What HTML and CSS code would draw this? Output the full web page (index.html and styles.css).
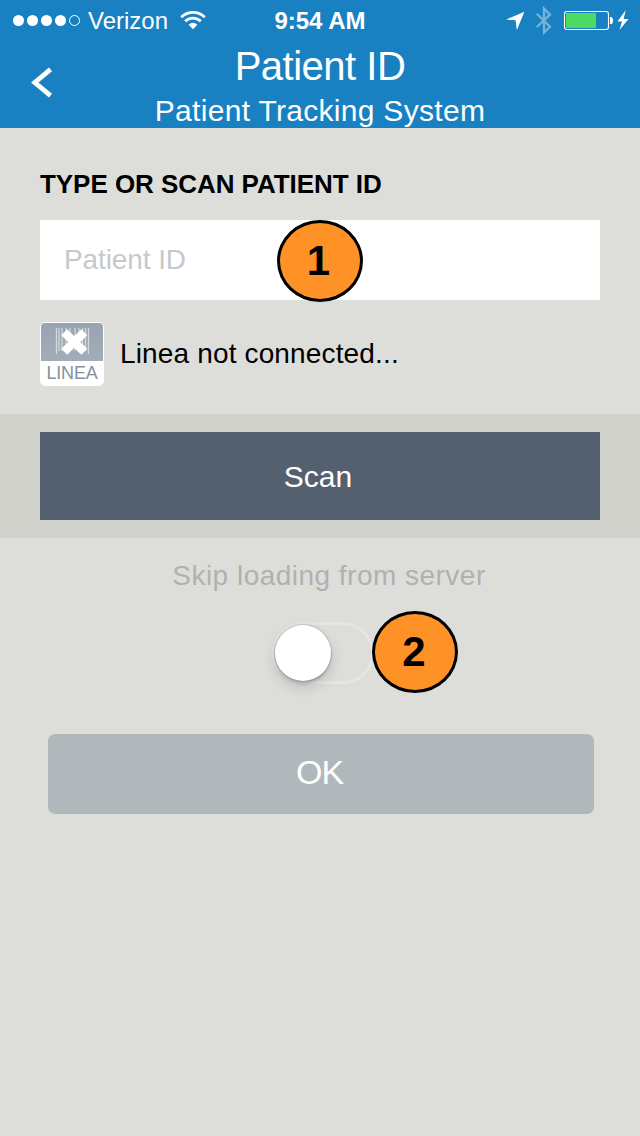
FILE: index.html
```html
<!DOCTYPE html>
<html lang="en">
<head>
<meta charset="utf-8">
<title>Patient ID</title>
<link rel="stylesheet" href="styles.css">
</head>
<body>
<header class="header">
  <div class="status">
    <div class="status-left">
      <svg class="signal" width="68" height="12" viewBox="0 0 68 12" fill="#fff">
        <circle cx="5.5" cy="5.500" r="5.500"/><circle cx="19.5" cy="5.500" r="5.500"/><circle cx="33.5" cy="5.500" r="5.500"/><circle cx="47.5" cy="5.500" r="5.500"/>
        <circle cx="61.5" cy="5.500" r="5" fill="none" stroke="#fff"/>
      </svg>
      <span class="carrier">Verizon</span>
      <svg class="wifi" width="26" height="20" viewBox="0 0 26 20">
        <g fill="none" stroke="#fff" stroke-width="2.8">
          <path d="M1.2 7.2A16.6 16.6 0 0 1 24.8 7.2"/>
          <path d="M5.2 11.3A11 11 0 0 1 20.8 11.3"/>
        </g>
        <path d="M8.6 14.7A6.2 6.2 0 0 1 17.4 14.7L13 19.2Z" fill="#fff"/>
      </svg>
    </div>
    <span class="time">9:54 AM</span>
    <div class="status-right">
      <svg width="124" height="30" viewBox="0 0 124 30">
        <path d="M-0.200 14.600L18.400 6.700L10.800 25.200L9.600 15.200Z" fill="#fff"/>
        <path d="M30.800 8.700L44 21.800L38 27.600V3.600L44 9.600L30.800 22" fill="none" stroke="#73b3dc" stroke-width="2.300"/>
        <rect x="58.500" y="6.500" width="44" height="18" rx="2.500" fill="none" stroke="#fff" stroke-width="1.100"/>
        <rect x="60" y="8" width="30" height="15" fill="#4cd964"/>
        <path d="M104 12H105.500Q107 12.500 107 15.500T105.500 19H104Z" fill="#fff"/>
        <path d="M119.800 5L111.500 16.600H116L113.500 25L122.500 14H117.600Z" fill="#fff"/>
      </svg>
    </div>
  </div>
  <div class="nav">
    <svg class="back" width="22" height="32" viewBox="0 0 22 32"><path d="M19.500 3.300L3.800 16.500L19.500 29.700" fill="none" stroke="#fff" stroke-width="4.800"/></svg>
    <div class="titles">
      <h1 class="title">Patient ID</h1>
      <p class="subtitle">Patient Tracking System</p>
    </div>
  </div>
</header>
<main>
  <section class="entry">
    <h2 class="label">TYPE OR SCAN PATIENT ID</h2>
    <div class="field">
      <span class="placeholder">Patient ID</span>
      <span class="badge badge-one">1</span>
    </div>
    <div class="device">
      <div class="linea">
        <svg class="barcode" width="62" height="38" viewBox="0 0 62 38">
          <path d="M15.500 5V31M18 5V28M21 5V28M25 5V28M29 5V28M34 5V28M38 5V28M41.500 5V28M44.500 5V28M47.500 5V31" stroke="#d3d8dd" stroke-width="1.300"/>
          <path d="M23.200 9.200L43.300 28.800M43.300 9.200L23.200 28.800" stroke="#fff" stroke-width="8.500"/>
        </svg>
        <span class="linea-name">LINEA</span>
      </div>
      <span class="device-text">Linea not connected...</span>
    </div>
  </section>
  <section class="scan-band"><div class="scan">Scan</div></section>
  <section class="options">
    <p class="skip">Skip loading from server</p>
    <div class="toggle">
      <div class="knob"></div>
      <span class="badge badge-two">2</span>
    </div>
    <div class="ok">OK</div>
  </section>
</main>
</body>
</html>
```
FILE: styles.css
```css
* { box-sizing: border-box; }
body {
  margin: 0;
  min-height: 1136px;
  background: #dddeda;
  color: #000;
  font-family: "Liberation Sans", Arial, sans-serif;
}
h1, h2, p { margin: 0; font-weight: 400; }
svg { display: block; flex: none; }
.header { height: 128px; background: #1981c1; color: #fff; }
.status {
  display: grid;
  grid-template-columns: 220px 200px 220px;
  height: 40px;
  line-height: 41px;
  font-size: 24px;
}
.status-left { display: flex; padding-left: 13px; }
.signal { margin-top: 15px; }
.carrier { width: 80px; margin-left: 7px; }
.wifi { margin: 10px 0 0 12px; }
.time { text-align: center; font-weight: 700; }
.status-right { padding-left: 66px; }
.status-right { padding-left: 86px; }
.status-right svg { margin-top: 5px; }
.nav { display: grid; grid-template-columns: 84px 1fr 84px; height: 88px; }
.back { margin: 26px 0 0 31px; }
.titles { text-align: center; white-space: nowrap; }
.title { font-size: 40px; line-height: 52px; letter-spacing: -0.5px; }
.subtitle { font-size: 30px; line-height: 37px; letter-spacing: 0.3px; }
.entry { height: 286px; padding: 36px 40px 0; }
.label { font-size: 26px; font-weight: 700; line-height: 40px; letter-spacing: -0.05px; white-space: nowrap; }
.field {
  position: relative;
  height: 80px;
  margin-top: 16px;
  padding-left: 24px;
  background: #fff;
  color: #c7c7cd;
  font-size: 28px;
  line-height: 79px;
}
.placeholder { letter-spacing: -0.1px; }
.badge {
  position: absolute;
  width: 86px;
  height: 82px;
  border: 3px solid #000;
  border-radius: 50%;
  background: #ff9226;
  color: #000;
  font-size: 42px;
  font-weight: 700;
  line-height: 75px;
  text-align: center;
}
.badge-one { left: 237px; top: 0; padding-right: 3px; }
.badge-two { left: 97px; top: -14px; padding-right: 2px; }
.device { display: flex; align-items: center; gap: 16px; margin-top: 22px; }
.linea {
  width: 64px;
  height: 64px;
  border: 1px solid #fff;
  border-radius: 5px;
  background: #fff;
  overflow: hidden;
}
.barcode { background: linear-gradient(#98a4b0, #a2adb8); }
.linea-name {
  display: block;
  color: #8491a0;
  font-size: 18px;
  line-height: 24px;
  letter-spacing: -0.2px;
  text-align: center;
}
.device-text { font-size: 28px; line-height: 64px; letter-spacing: 0.15px; }
.scan-band { height: 124px; padding: 18px 40px; background: #d0d1cb; }
.scan {
  height: 88px;
  padding-right: 4px;
  background: #55606e;
  color: #fff;
  font-size: 30px;
  line-height: 89px;
  text-align: center;
}
.options { padding: 18px 46px 0 48px; }
.skip {
  padding-left: 16px;
  color: #b0b1b1;
  font-size: 28px;
  line-height: 40px;
  letter-spacing: 0.48px;
  text-align: center;
}
.toggle {
  position: relative;
  width: 102px;
  height: 62px;
  margin: 26px 0 0 224px;
  border: 3px solid #e5e5e5;
  border-radius: 31px;
}
.knob {
  width: 56px;
  height: 56px;
  border-radius: 50%;
  background: #fff;
  box-shadow: 0 0 1px 1px rgba(0,0,0,.12), 0 6px 14px rgba(0,0,0,.15), 0 3px 3px rgba(0,0,0,.14);
}
.ok {
  height: 80px;
  margin-top: 50px;
  padding-right: 3px;
  border-radius: 7px;
  background: #b1b8bb;
  color: #fff;
  font-size: 34px;
  line-height: 77px;
  text-align: center;
  letter-spacing: -1px;
}
```
